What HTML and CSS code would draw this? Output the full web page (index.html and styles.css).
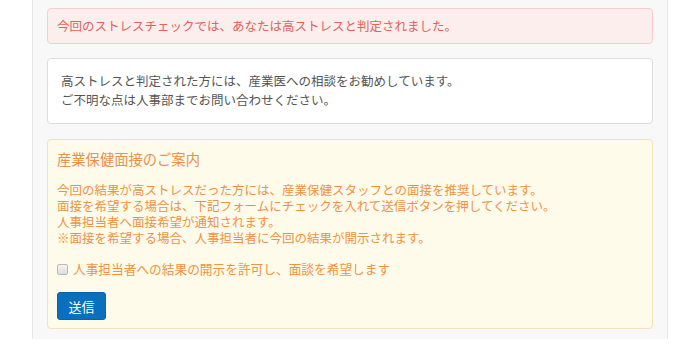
FILE: index.html
```html
<!DOCTYPE html>
<html lang="ja">
<head>
    <meta charset="UTF-8">
    <meta name="viewport" content="width=device-width, initial-scale=1.0">
    <title>ストレスチェック結果</title>
    <link rel="stylesheet" href="styles.css">
</head>
<body>

<!-- 結果エリア -->
<div class="page">
    <div class="alert">今回のストレスチェックでは、あなたは高ストレスと判定されました。</div>

    <div class="notice">
        高ストレスと判定された方には、産業医への相談をお勧めしています。<br>
        ご不明な点は人事部までお問い合わせください。
    </div>

    <!-- 面接申込フォーム -->
    <form class="interview">
        <h2 class="interview-title">産業保健面接のご案内</h2>
        <p class="interview-text">
            今回の結果が高ストレスだった方には、産業保健スタッフとの面接を推奨しています。<br>
            面接を希望する場合は、下記フォームにチェックを入れて送信ボタンを押してください。<br>
            人事担当者へ面接希望が通知されます。<br>
            ※面接を希望する場合、人事担当者に今回の結果が開示されます。
        </p>
        <label class="agree">
            <input type="checkbox" class="agree-check">
            人事担当者への結果の開示を許可し、面談を希望します
        </label>
        <button type="button" class="send-btn">送信</button>
    </form>
</div>

</body>
</html>
```

FILE: styles.css
```css
body {
    margin: 0;
    padding: 0;
    background-color: #fff;
    font-family: "Noto Sans CJK JP", "Noto Sans", sans-serif;
}
.page {
    width: 606px;
    margin-left: 32px;
    padding: 8px 14px 10px 14px;
    background-color: #f8f8f8;
    border-left: 1px solid #e6e6e6;
    border-right: 1px solid #e6e6e6;
}
.alert {
    height: 34px;
    line-height: 34px;
    padding: 0 9px;
    font-size: 12.5px;
    color: #e2625c;
    background-color: #fdeeee;
    border: 1px solid #f8cccc;
    border-radius: 4px;
    margin-bottom: 14px;
}
.notice {
    padding: 12px 13px 14px 13px;
    font-size: 12.5px;
    line-height: 19px;
    color: #555;
    background-color: #fff;
    border: 1px solid #dddddd;
    border-radius: 4px;
    margin-bottom: 15px;
}
.interview {
    padding: 9px 9px 8px 9px;
    background-color: #fffbea;
    border: 1px solid #f6e0bd;
    border-radius: 4px;
    color: #ef9246;
}
.interview-title {
    margin: 0;
    font-size: 14.3px;
    font-weight: normal;
    line-height: 20px;
    color: #e8914b;
}
.interview-text {
    margin: 13px 0 0 0;
    font-size: 12.5px;
    line-height: 16px;
}
.agree {
    display: flex;
    align-items: center;
    gap: 5px;
    margin-top: 14px;
    font-size: 12.7px;
    line-height: 18px;
}
.agree-check {
    appearance: none;
    width: 11px;
    height: 11px;
    margin: 0;
    border: 1px solid #b9b9b9;
    border-radius: 2px;
    background: linear-gradient(#f4f4f4, #dcdcdc);
}
.send-btn {
    display: block;
    margin-top: 14px;
    width: 49px;
    height: 28px;
    padding: 0;
    font-family: "Noto Sans CJK JP", sans-serif;
    font-size: 13px;
    color: #fff;
    background-color: #0a6fbd;
    border: 1px solid #0863ab;
    border-radius: 3px;
}
```
